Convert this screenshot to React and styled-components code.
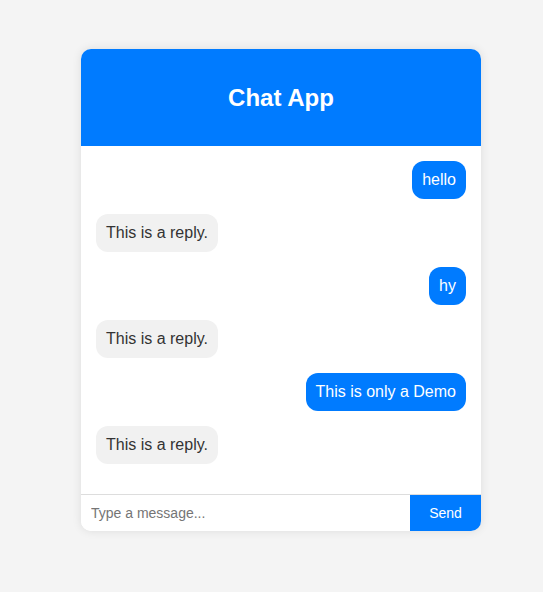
import React from "react";
import styled, { createGlobalStyle } from "styled-components";

const GlobalStyle = createGlobalStyle`
body {
  margin: 0;
  background: #f4f4f4;
  font-family: "Liberation Sans", Arial, sans-serif;
}
`;

const Page = styled.div`
padding-top: 49px;
padding-left: 81px;
min-height: 592px;
box-sizing: border-box;
`;

const ChatCard = styled.div`
width: 400px;
background: #fff;
border-radius: 10px;
box-shadow: 0 0 10px rgba(0, 0, 0, 0.1);
overflow: hidden;
`;

const Header = styled.header`
background: #007bff;
color: #fff;
height: 97px;
display: flex;
align-items: center;
justify-content: center;
`;

const Title = styled.h2`
margin: 0;
font-size: 24px;
font-weight: bold;
`;

const Messages = styled.div`
padding: 15px;
display: flex;
flex-direction: column;
`;

const Bubble = styled.div`
align-self: ${(p) => (p.$mine ? "flex-end" : "flex-start")};
background: ${(p) => (p.$mine ? "#007bff" : "#f1f1f1")};
color: ${(p) => (p.$mine ? "#fff" : "#333")};
padding: 10px;
font-size: 16px;
line-height: 18px;
border-radius: 12px;
margin-bottom: 15px;
`;

const InputRow = styled.div`
display: flex;
border-top: 1px solid #ddd;
height: 36px;
`;

const MessageInput = styled.input`
flex: 1;
border: none;
outline: none;
padding: 0 10px;
font-size: 14px;
font-family: "Liberation Sans", Arial, sans-serif;
color: #333;
&::placeholder {
  color: #757575;
}
`;

const SendButton = styled.button`
width: 71px;
border: none;
background: #007bff;
color: #fff;
font-size: 14px;
font-family: "Liberation Sans", Arial, sans-serif;
cursor: pointer;
`;

const messages = [
  { text: "hello", mine: true },
  { text: "This is a reply.", mine: false },
  { text: "hy", mine: true },
  { text: "This is a reply.", mine: false },
  { text: "This is only a Demo", mine: true },
  { text: "This is a reply.", mine: false },
];

export default function App() {
  return (
    <Page>
      <GlobalStyle />
      <ChatCard>
        <Header>
          <Title>Chat App</Title>
        </Header>
        <Messages>
          {messages.map((m, i) => (
            <Bubble key={i} $mine={m.mine}>
              {m.text}
            </Bubble>
          ))}
        </Messages>
        <InputRow>
          <MessageInput placeholder="Type a message..." />
          <SendButton>Send</SendButton>
        </InputRow>
      </ChatCard>
    </Page>
  );
}
